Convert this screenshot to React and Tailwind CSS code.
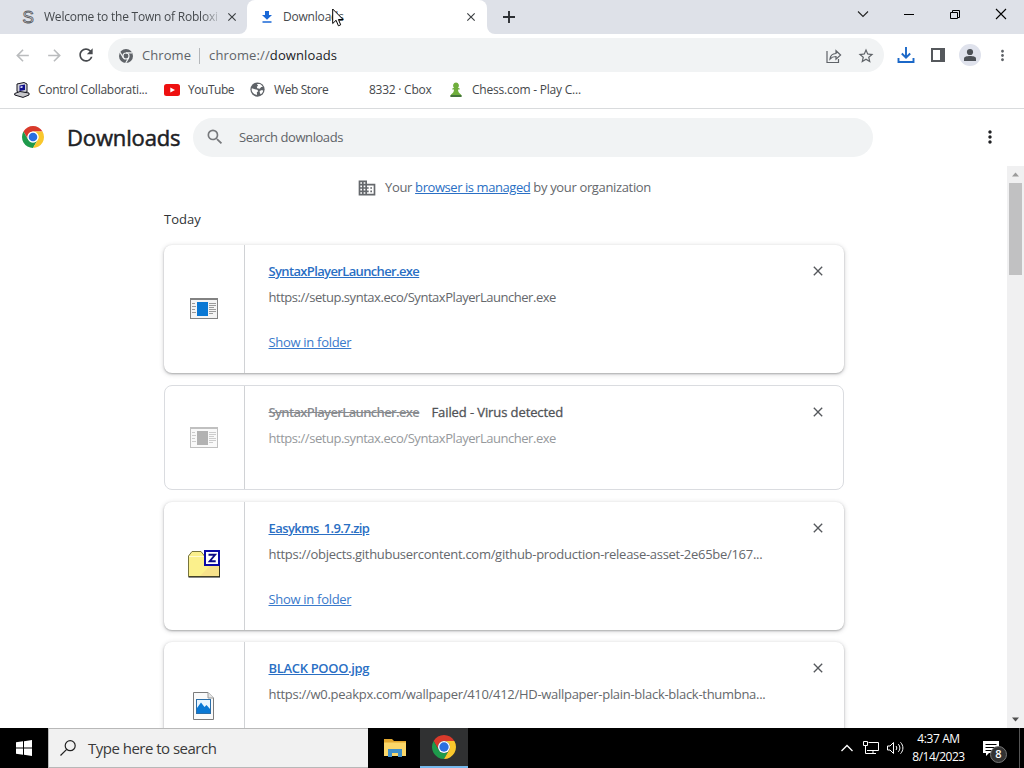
import React from 'react';
import { MdArrowBack, MdArrowForward, MdBusiness, MdClose, MdMoreVert, MdRefresh, MdSearch, MdStarBorder } from 'react-icons/md';

const downloads = [
  {
    id: 1,
    name: 'SyntaxPlayerLauncher.exe',
    nameClass: 'tracking-[-0.64px]',
    url: 'https://setup.syntax.eco/SyntaxPlayerLauncher.exe',
    urlClass: 'tracking-[-0.46px]',
    icon: 'exe',
    showInFolder: true,
    height: 'h-32'
  },
  {
    id: 2,
    name: 'SyntaxPlayerLauncher.exe',
    nameClass: 'tracking-[-0.64px]',
    url: 'https://setup.syntax.eco/SyntaxPlayerLauncher.exe',
    urlClass: 'tracking-[-0.46px]',
    icon: 'exe',
    failed: 'Failed - Virus detected',
    height: 'h-[105px]'
  },
  {
    id: 3,
    name: 'Easykms_1.9.7.zip',
    nameClass: 'tracking-[-0.58px]',
    url: 'https://objects.githubusercontent.com/github-production-release-asset-2e65be/167...',
    urlClass: 'tracking-[-0.29px]',
    icon: 'zip',
    showInFolder: true,
    height: 'h-32'
  },
  {
    id: 4,
    name: 'BLACK POOO.jpg',
    nameClass: 'tracking-[-0.33px]',
    url: 'https://w0.peakpx.com/wallpaper/410/412/HD-wallpaper-plain-black-black-thumbna...',
    urlClass: 'tracking-[-0.29px]',
    icon: 'jpg',
    height: 'h-32'
  }
];

const ChromeLogo = ({ className }) => (
  <svg viewBox="0 0 24 24" className={className}>
    <path fill="#d93a2b" d="M12 6H22.39A12 12 0 0 0 1.61 6L6.8 15A6 6 0 0 1 12 6z" />
    <path fill="#1e9a4b" d="M6.8 15L1.61 6A12 12 0 0 0 12 24L17.2 15A6 6 0 0 1 6.8 15z" />
    <path fill="#f9c72c" d="M17.2 15L12 24A12 12 0 0 0 22.39 6H12A6 6 0 0 1 17.2 15z" />
    <circle cx="12" cy="12" r="6" fill="#fff" />
    <circle cx="12" cy="12" r="4.7" fill="#2a6fe0" />
  </svg>
);

const ChromeMono = () => (
  <svg viewBox="0 0 24 24" className="w-[14px] h-[14px]">
    <circle cx="12" cy="12" r="12" fill="#5f6368" />
    <circle cx="12" cy="12" r="5.2" fill="none" stroke="#f1f3f4" strokeWidth="2" />
    <path d="M12 6.5H22.5M7.2 14.8L1.8 5.5M16.8 14.8L11.5 24" stroke="#f1f3f4" strokeWidth="2" />
  </svg>
);

const Globe = () => (
  <svg viewBox="0 0 16 16" className="w-[15px] h-[15px]">
    <circle cx="8" cy="8" r="7.6" fill="#5f6368" />
    <path fill="#fff" d="M2 6.600l3.200 1.200 2.600.4 1 1.600-1.500 1.200.2 2.800C4.300 13.600 1.800 11 1.700 8zM7.300 2.200l3.200-.1c1.500.7 2.500 1.700 3.100 3.100l-1.700.2-1.500 1.900-2.700-.7-.4-1.600 1.300-1z" />
    <path fill="#fff" d="M10.200 9.600l2.600-1 1.300.6c-.4 1.700-1.400 3-2.800 3.900l-.7-1.500z" />
  </svg>
);

const FileIcon = ({ type }) => {
  if (type === 'exe') {
    return (
      <svg viewBox="0 0 28 21" className="w-7 h-[21px] mb-px" shapeRendering="crispEdges">
        <rect width="28" height="21" fill="#828282" />
        <rect x="1" y="2" width="26" height="18" fill="#f4f4f4" />
        <rect x="7" y="4" width="11" height="14" fill="#0a78d4" />
        <path d="M2 5.500h3M2 8.500h4M2 11.500h3M2 14.500h4M19 5.500h7M19 7.500h7M19 9.500h5M19 11.500h7M19 13.500h7M19 15.500h4" stroke="#9a9a9a" />
      </svg>
    );
  }
  if (type === 'zip') {
    return (
      <svg viewBox="0 0 32 28" className="w-8 h-7 mb-1">
        <path d="M.5 26.500V6L4 1.500h9L16.500 6h15v20.500z" fill="#fbf08c" stroke="#77743c" />
        <path d="M1 6.500h15" stroke="#fffbd0" />
        <path d="M22 16h9v10H12z" fill="#f5d98a" opacity=".6" />
        <path d="M.5 27H32V15" fill="none" stroke="#111" strokeWidth="1.200" />
        <rect x="17" y="1" width="14" height="14" fill="#fff" stroke="#0a0aa6" strokeWidth="2" />
        <path d="M20.500 4.800h6.600l-5.400 6.400h6" fill="none" stroke="#0a0a86" strokeWidth="1.900" />
      </svg>
    );
  }
  return (
    <svg viewBox="0 0 21 28" className="w-[21px] h-7 mr-px">
      <path d="M.5.5H15L20.500 6v21.500H.5z" fill="#fafafa" stroke="#7c7c7c" />
      <path d="M15 .5V6h5.500" fill="#e6e6e6" stroke="#9a9a9a" />
      <rect x="3.500" y="7.500" width="14" height="14" fill="#eaf6ff" stroke="#2b6ea8" />
      <path d="M4 21v-5l4-5.500 3.500 4.500 2-2 3.500 4V21z" fill="#0a78d4" />
    </svg>
  );
};

const TabStrip = () => (
  <div className="flex h-[34px] bg-[#dee1e8] text-[12px] text-[#45494d]">
    <div className="flex w-[247px] bg-white">
      <div className="flex items-center w-[247px] pl-[21px] pr-2 rounded-br-lg bg-[#dee1e8]">
        <svg viewBox="0 0 14 18" className="w-[14px] h-[18px] shrink-0">
          <text x="1.500" y="15" fontSize="17" fontFamily="Liberation Sans" fill="#eef0f3" stroke="#5b5e63" strokeWidth=".9">S</text>
        </svg>
        <span className="ml-[9px] w-[174px] whitespace-nowrap tracking-[-0.22px] [mask-image:linear-gradient(to_right,black_158px,transparent_178px)]">
          Welcome to the Town of Robloxi
        </span>
        <MdClose className="ml-[7px] w-[14px] h-[14px] shrink-0 text-[#3c4043]" />
      </div>
    </div>
    <div className="flex w-[240px] bg-[#dee1e8]">
      <div className="flex items-center w-[240px] pl-[13px] pr-[9px] rounded-t-lg bg-white">
        <svg viewBox="0 0 14 14" className="w-[14px] h-[14px] shrink-0">
          <path fill="#1a68d6" d="M5 1h4v4h3L7 9.800 2 5h3zM2.500 11.200h9v1.500h-9z" />
        </svg>
        <span className="ml-[9px] flex-1 tracking-[-0.2px]">Downloads</span>
        <MdClose className="w-[14px] h-[14px] text-[#3c4043]" />
      </div>
    </div>
    <div className="flex flex-1 bg-white">
      <div className="flex flex-1 rounded-bl-lg bg-[#dee1e8]">
        <svg viewBox="0 0 12 12" className="ml-4 mt-[11px] w-3 h-3">
          <path d="M6 0v12M0 6h12" stroke="#2c2f33" strokeWidth="1.900" />
        </svg>
        <div className="ml-auto flex items-center h-7 gap-[34px] pr-[17px]">
          <svg viewBox="0 0 12 12" className="w-3 h-3"><path d="M1 3.500l5 5 5-5" fill="none" stroke="#222" strokeWidth="1.100" /></svg>
          <svg viewBox="0 0 12 12" className="w-3 h-3"><path d="M1 6.500h10" stroke="#000" /></svg>
          <svg viewBox="0 0 12 12" className="w-3 h-3"><path d="M1.500 4.500h7v6h-7zM3.500 4.500v-2h7v7h-2" fill="none" stroke="#000" /></svg>
          <svg viewBox="0 0 12 12" className="w-3 h-3"><path d="M1 1l10 10M11 1L1 11" stroke="#000" strokeWidth="1.100" /></svg>
        </div>
      </div>
    </div>
  </div>
);

const Toolbar = () => (
  <div className="flex items-center h-[42px] pl-[13px] pr-[13px] text-[#5f6368]">
    <MdArrowBack className="w-[19px] h-[19px] text-[#babcbe]" />
    <MdArrowForward className="ml-[13px] w-[19px] h-[19px] text-[#babcbe]" />
    <MdRefresh className="ml-[12px] w-5 h-5 text-[#474a4e]" />
    <div className="ml-[12px] flex items-center w-[776px] h-[34px] pt-px pl-[11px] pr-[9px] rounded-full bg-[#f1f3f4] text-[13px]">
      <ChromeMono />
      <span className="ml-[9px] tracking-[0.08px]">Chrome</span>
      <span className="mx-2 w-px h-4 bg-[#b4b7ba]"></span>
      <span className="ml-px tracking-[0.12px]">chrome://<span className="text-[#202124]">downloads</span></span>
      <svg viewBox="0 0 16 16" className="ml-auto w-4 h-4" fill="none" stroke="#5f6368" strokeWidth="1.200">
        <path d="M1 3v11.500h11.500V11" />
        <path d="M4 11c.3-3.600 2.300-5.300 6-5.500V2.700l4.600 4.300-4.600 4.200V8.500C7.300 8.500 5.500 9.200 4 11z" />
      </svg>
      <MdStarBorder className="ml-[15px] w-[18px] h-[18px]" />
    </div>
    <svg viewBox="0 0 18 18" className="ml-[13px] w-[18px] h-[18px]" fill="none" stroke="#1b68c8" strokeWidth="1.900">
      <path d="M9 1v10.500M4.800 7.500L9 11.700l4.200-4.200M1.500 12v4h15v-4" />
    </svg>
    <svg viewBox="0 0 14 14" className="ml-4 w-[14px] h-[14px]">
      <path fill="#55585c" fillRule="evenodd" d="M0 0h14v14H0zM2 2v10h7V2z" />
    </svg>
    <div className="ml-[14px] flex justify-center items-center w-[22px] h-[22px] rounded-full bg-[#dfe2ec]">
      <svg viewBox="0 0 14 14" className="w-[14px] h-[14px]" fill="#4c5056">
        <circle cx="7" cy="4" r="3.100" />
        <path d="M1 13v-2.500C1 8.700 4 8 7 8s6 .7 6 2.500V13z" />
      </svg>
    </div>
    <MdMoreVert className="ml-[13px] w-[17px] h-[17px] shrink-0" />
  </div>
);

const BookmarksBar = () => (
  <div className="flex items-center h-[33px] pb-[5px] pl-[14px] border-b border-[#d9dbdd] text-[12px] text-[#45484b] whitespace-nowrap">
    <svg viewBox="0 0 16 16" className="w-4 h-4">
      <path d="M3 2l7-1.500 3 1.500v8l-7 1.500-3-2z" fill="#d3d3d8" stroke="#15151f" />
      <path d="M5.500 3.500l5.500-1v5.500l-5.500 1z" fill="#10108c" />
      <path d="M6.500 4.500l2-.4v1.600l-2 .4z" fill="#e8ecff" />
      <path d="M.7 11.500L6 9.500l9 1.500v2l-6 2.400-8.300-2.400z" fill="#c8c8cc" stroke="#15151f" />
    </svg>
    <span className="ml-2 w-[109px] tracking-[-0.26px]">Control Collaborati...</span>
    <svg viewBox="0 0 16 12" className="ml-[17px] w-4 h-3">
      <rect width="16" height="12" rx="2.500" fill="#ee1010" />
      <path d="M6.300 3.400L11 6l-4.700 2.600z" fill="#fff" />
    </svg>
    <span className="ml-2 w-[46px] tracking-[-0.47px]">YouTube</span>
    <span className="ml-4"><Globe /></span>
    <span className="ml-[9px] w-[55px] tracking-[-0.4px]">Web Store</span>
    <span className="ml-10 w-[62px] tracking-[-0.25px]">8332 · Cbox</span>
    <svg viewBox="0 0 14 16" className="ml-[18px] w-[14px] h-4">
      <path d="M7 .5a3 3 0 0 1 2 5.200l1.700.9v1H9c.1 2.300.8 3.500 2.700 4.700.5.500.8 1.400.8 2.400H1.500c0-1 .3-1.900.8-2.400C4.200 11.100 4.900 9.900 5 7.600H3.300v-1L5 5.700A3 3 0 0 1 7 .5z" fill="#6fae3c" />
      <path d="M1.500 13h11v2h-11z" fill="#45753c" />
    </svg>
    <span className="ml-[9px] tracking-[-0.22px]">Chess.com - Play C...</span>
  </div>
);

const DownloadCard = ({ item }) => (
  <div className={`flex shrink-0 rounded-lg bg-white ${item.height} ${item.failed ? 'border border-[#dadce0]' : 'shadow-[0_1px_2px_rgba(60,64,67,0.35),0_1px_4px_1px_rgba(60,64,67,0.16)]'}`}>
    <div className={`flex justify-center items-center border-r border-[#d0d2d5] ${item.failed ? 'w-[80px] pr-px' : 'w-[81px]'}`}>
      <div className={item.failed ? 'grayscale opacity-50' : ''}>
        <FileIcon type={item.icon} />
      </div>
    </div>
    <div className="flex-1 pt-4 pl-[23.5px] text-[13px] leading-5 whitespace-nowrap">
      <div className="flex">
        {item.failed ? (
          <>
            <span className={`w-[151px] font-semibold line-through text-[#888b8f] ${item.nameClass}`}>{item.name}</span>
            <span className="ml-3 tracking-[-0.1px] text-[#505357] [-webkit-text-stroke:0.3px]">{item.failed}</span>
          </>
        ) : (
          <a className={`font-semibold underline text-[#2a6fc4] ${item.nameClass}`}>{item.name}</a>
        )}
      </div>
      <div className={`mt-1.5 ${item.urlClass} ${item.failed ? 'text-[#96999c]' : 'text-[#65686c]'}`}>{item.url}</div>
      {item.showInFolder && <a className="block mt-[25px] tracking-[-0.3px] underline text-[#3a7acb]">Show in folder</a>}
    </div>
    <MdClose className={`w-4 h-4 mt-[18px] text-[#55585c] ${item.failed ? 'mr-[17px]' : 'mr-[18px]'}`} />
  </div>
);

const Scrollbar = () => (
  <div className="flex flex-col items-center w-[17px] bg-[#f0f0f1]">
    <svg viewBox="0 0 17 17" className="w-[17px] h-[17px]"><path d="M5 10.500l3.500-4 3.500 4z" fill="#9b9b9b" /></svg>
    <div className="w-[13px] h-[92px] bg-[#c1c1c2]"></div>
    <svg viewBox="0 0 17 17" className="mt-auto w-[17px] h-[17px]"><path d="M5 6.500l3.500 4 3.500-4z" fill="#505050" /></svg>
  </div>
);

const Taskbar = () => (
  <div className="flex h-10 bg-black text-white">
    <div className="flex justify-center items-center w-12">
      <svg viewBox="0 0 16 16" className="w-4 h-4" fill="#fff">
        <path d="M0 2.300l7-1v6.200H0zM8 1.200L16 0v7.500H8zM0 8.500h7v6.200l-7-1zM8 8.500h8V16l-8-1.200z" />
      </svg>
    </div>
    <div className="flex items-center w-80 pl-[11px] border-y border-[#b8b8b8] border-l bg-[#f1f1f1] text-[#3a3a3a]">
      <svg viewBox="0 0 16 16" className="w-4 h-4" fill="none" stroke="#222" strokeWidth="1.200">
        <circle cx="10.200" cy="5.700" r="5" />
        <path d="M6.700 9.300L.5 15.500" />
      </svg>
      <span className="ml-3 text-[15px] tracking-[-0.51px]">Type here to search</span>
    </div>
    <div className="flex justify-center items-center w-[52px] pl-0.5">
      <svg viewBox="0 0 22 20" className="w-[22px] h-5">
        <path d="M0 1h8l2 2h12v15H0z" fill="#e2a72e" />
        <path d="M0 4.500h22V18H0z" fill="#fbd769" />
        <path d="M4 11h14v8h-4v-4H8v4H4z" fill="#3f8fc9" />
      </svg>
    </div>
    <div className="flex justify-center items-center w-12 border-b-2 border-[#76b9ed] bg-[#303132]">
      <ChromeLogo className="w-6 h-6" />
    </div>
    <div className="ml-auto flex items-center">
      <svg viewBox="0 0 14 8" className="w-[14px] h-2"><path d="M1.500 7L7 1.500 12.500 7" fill="none" stroke="#fff" strokeWidth="1.300" /></svg>
      <svg viewBox="0 0 16 14" className="ml-[9px] w-4 h-[14px]" fill="none" stroke="#fff">
        <path d="M5.500 1.500h10v8H4M.5.500h4v4h-4zM2.500 4.500v8H6M6 12.500h7M10 9.500v3" />
      </svg>
      <svg viewBox="0 0 17 14" className="ml-2 w-[17px] h-[14px]" fill="none" stroke="#fff">
        <path d="M.5 5v4h2.500l3.500 3.500v-11L3 5zM9 5c1 1.300 1 2.700 0 4M11.300 3.200c2.100 2.300 2.100 5.300 0 7.600M13.500 1.300c3.200 3.500 3.200 7.900 0 11.400" />
      </svg>
      <div className="w-[69px] text-center text-[12px] leading-[18px]">
        <div className="tracking-[-0.4px]">4:37 AM</div>
        <div className="tracking-[-0.5px]">8/14/2023</div>
      </div>
      <div className="relative ml-[10px] mr-5">
        <svg viewBox="0 0 16 16" className="w-4 h-4">
          <path d="M0 1h16v12H6l-3 3v-3H0z" fill="#fff" />
          <path d="M2.500 4.500h11M2.500 7.500h11M2.500 10.500h7" stroke="#000" />
        </svg>
        <span className="absolute left-[7px] top-[6px] flex justify-center items-center w-[17px] h-[17px] rounded-full border border-[#777] bg-[#333] text-[11px] font-semibold">8</span>
      </div>
      <div className="mr-1 w-px h-10 bg-[#555]"></div>
    </div>
  </div>
);

const App = () => {
  return (
    <div className="relative flex flex-col w-[1024px] h-[768px] overflow-hidden bg-white font-['Open_Sans','Noto_Sans',sans-serif]">
      <TabStrip />
      <Toolbar />
      <BookmarksBar />

      <div className="flex items-center h-[57px] pl-[22px] pr-[24px] shrink-0">
        <ChromeLogo className="w-[22px] h-[22px] mb-px" />
        <h1 className="ml-[23px] w-[114px] text-[22px] tracking-[-0.15px] text-[#202124] [-webkit-text-stroke:0.5px]">Downloads</h1>
        <div className="ml-3 flex items-center w-[680px] h-[39px] pl-3 rounded-full bg-[#f1f3f4] text-[13px] text-[#5f6368]">
          <MdSearch className="w-5 h-5 mb-px text-[#77797c]" />
          <span className="ml-[14px] tracking-[-0.43px]">Search downloads</span>
        </div>
        <MdMoreVert className="ml-auto w-5 h-5 mb-0.5 text-[#202124]" />
      </div>

      <div className="flex flex-1 min-h-0">
        <div className="flex-1 pl-[164px] overflow-hidden">
          <div className="w-[680px]">
            <div className="flex justify-center items-center h-[42px] pt-px text-[13px] text-[#65686c]">
              <MdBusiness className="w-5 h-5 mr-2" />
              <span className="tracking-[-0.35px]">
                Your <a className="underline tracking-[-0.43px] text-[#2a6fc4]">browser is managed</a> by your organization
              </span>
            </div>
            <div className="h-[37px] text-[13px] leading-[22px] text-[#303336]">Today</div>
            <div className="flex flex-col gap-3">
              {downloads.map(item => (
                <DownloadCard key={item.id} item={item} />
              ))}
            </div>
          </div>
        </div>
        <Scrollbar />
      </div>

      <Taskbar />

      {/* mouse pointer */}
      <svg viewBox="0 0 12 19" className="absolute left-[332px] top-[8px] w-3 h-[19px]">
        <path d="M.7 1v14.500l3.400-3.200 2.300 5.500 2.300-1-2.300-5.300h4.700z" fill="#fff" stroke="#000" />
      </svg>
    </div>
  );
};

export default App;
